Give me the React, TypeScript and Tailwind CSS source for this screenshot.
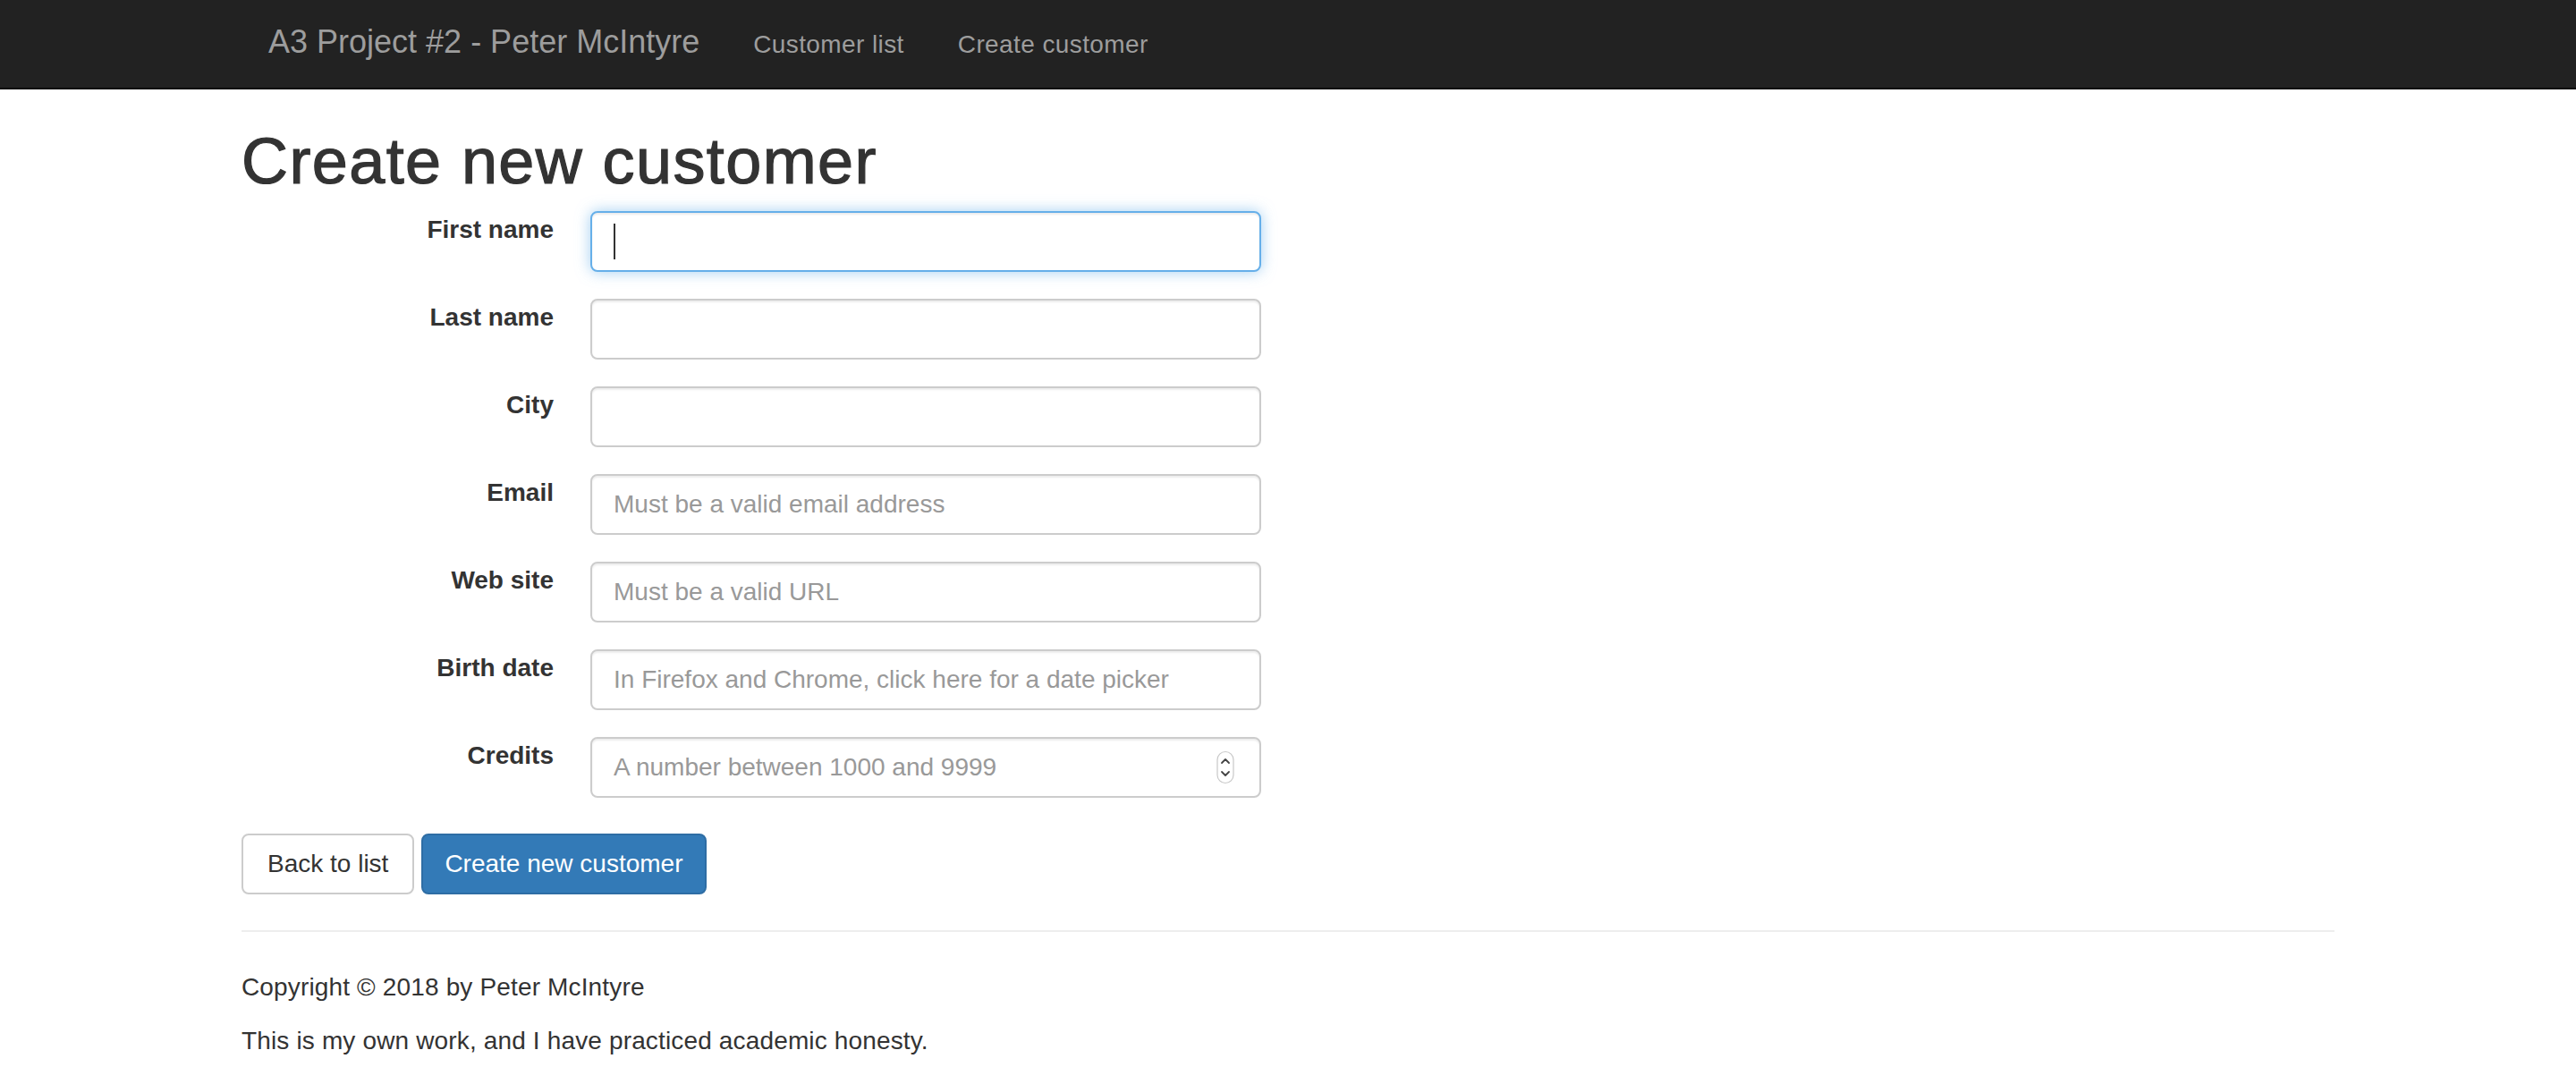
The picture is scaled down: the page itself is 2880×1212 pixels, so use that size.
import React from "react";

const fields: { label: string; placeholder: string; kind?: "focus" | "number" }[] = [
  { label: "First name", placeholder: "", kind: "focus" },
  { label: "Last name", placeholder: "" },
  { label: "City", placeholder: "" },
  { label: "Email", placeholder: "Must be a valid email address" },
  { label: "Web site", placeholder: "Must be a valid URL" },
  { label: "Birth date", placeholder: "In Firefox and Chrome, click here for a date picker" },
  { label: "Credits", placeholder: "A number between 1000 and 9999", kind: "number" },
];

function Spinner() {
  return (
    <svg width="20" height="37" viewBox="0 0 20 37" className="absolute right-[30px] top-1/2 -translate-y-1/2">
      <rect x="1" y="1" width="18" height="35" rx="9" fill="#fff" stroke="#c8c8c8" strokeWidth="1.2" />
      <polyline points="6,13.5 10,9.5 14,13.5" fill="none" stroke="#444" strokeWidth="1.8" strokeLinecap="round" strokeLinejoin="round" />
      <polyline points="6,23.5 10,27.5 14,23.5" fill="none" stroke="#444" strokeWidth="1.8" strokeLinecap="round" strokeLinejoin="round" />
    </svg>
  );
}

export default function App() {
  return (
    <div className="min-h-screen bg-white text-[#333] font-['Liberation_Sans',Arial,sans-serif] text-[28px] leading-[40px]">
      <nav className="h-[100px] bg-[#222] border-b-2 border-[#080808]">
        <div className="flex pl-[270px]">
          <a className="px-[30px] pt-[27px] text-[36px] leading-[40px] text-[#9d9d9d]">A3 Project #2 - Peter McIntyre</a>
          <a className="px-[30px] pt-[30px] text-[28px] leading-[40px] tracking-[0.4px] text-[#9d9d9d]">Customer list</a>
          <a className="px-[30px] pt-[30px] text-[28px] leading-[40px] tracking-[0.4px] text-[#9d9d9d]">Create customer</a>
        </div>
      </nav>

      <main className="ml-[270px] w-[2340px]">
        <h1 className="mt-[40px] mb-[16px] text-[72px] leading-[80px] tracking-[1.4px] text-[#333] [-webkit-text-stroke:1.2px_#333]">Create new customer</h1>

        <div className="flex flex-col gap-[30px]">
          {fields.map((f) => (
            <div key={f.label} className="flex items-start">
              <label className="w-[349px] mt-[1px] text-right font-bold text-[28px] leading-[40px] text-[#333]">{f.label}</label>
              <div className="relative ml-[41px] w-[750px]">
                <input
                  type="text"
                  readOnly
                  placeholder={f.placeholder}
                  className={
                    f.kind === "focus"
                      ? "block w-full h-[68px] px-[24px] py-[12px] rounded-[8px] border-2 border-[#66afe9] bg-white text-[28px] leading-[40px] outline-none shadow-[inset_0_2px_2px_rgba(0,0,0,0.075),0_0_16px_rgba(102,175,233,0.6)]"
                      : "block w-full h-[68px] px-[24px] py-[12px] rounded-[8px] border-2 border-[#ccc] bg-white text-[28px] leading-[40px] outline-none placeholder:text-[#999] shadow-[inset_0_2px_2px_rgba(0,0,0,0.075)]"
                  }
                />
                {f.kind === "focus" && (
                  <div className="absolute left-[26px] top-[14px] w-[2px] h-[40px] bg-[#333]" />
                )}
                {f.kind === "number" && <Spinner />}
              </div>
            </div>
          ))}
        </div>

        <div className="mt-[40px] flex gap-[8px]">
          <button className="h-[68px] px-[27px] rounded-[8px] border-2 border-[#ccc] bg-white text-[#333] text-[28px] leading-[40px]">Back to list</button>
          <button className="h-[68px] px-[24px] rounded-[8px] border-2 border-[#2e6da4] bg-[#337ab7] text-white text-[28px] leading-[40px]">Create new customer</button>
        </div>

        <hr className="mt-[40px] mb-[42px] border-0 border-t-2 border-[#eee]" />

        <footer className="tracking-[0.15px]">
          <p className="mb-[20px]">Copyright © 2018 by Peter McIntyre</p>
          <p className="mb-[20px]">This is my own work, and I have practiced academic honesty.</p>
        </footer>
      </main>
    </div>
  );
}
